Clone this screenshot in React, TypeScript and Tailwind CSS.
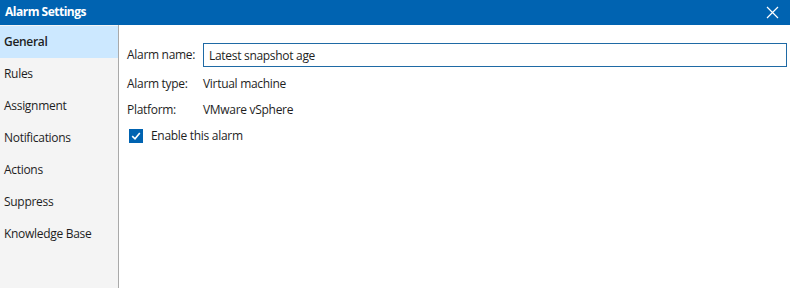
import { useState } from "react";

const NAV = [
  "General",
  "Rules",
  "Assignment",
  "Notifications",
  "Actions",
  "Suppress",
  "Knowledge Base",
];

export default function App() {
  const [active, setActive] = useState("General");
  const [name, setName] = useState("Latest snapshot age");
  const [enabled, setEnabled] = useState(true);

  return (
    <div className="flex h-[288px] w-[790px] flex-col overflow-hidden bg-white font-['Open_Sans',sans-serif] text-[12px] tracking-[-0.3px] text-[#1e1e1e]">
      <div className="flex h-[25px] shrink-0 items-center justify-between bg-[#0063b1] pb-[1px] pl-[5px] pr-[11px] text-white">
        <span className="text-[12px] font-bold tracking-[-0.5px]">Alarm Settings</span>
        <svg width="13" height="13" viewBox="0 0 13 13" aria-hidden>
          <path d="M1 1L12 12M12 1L1 12" stroke="white" strokeWidth="1.2" />
        </svg>
      </div>
      <div className="flex min-h-0 flex-1">
        <nav className="flex w-[119px] shrink-0 flex-col border-r border-[#a9a9a9] bg-[#f4f4f4] pt-[1px]">
          {NAV.map((item) => (
            <button
              key={item}
              type="button"
              onClick={() => setActive(item)}
              className={`flex h-[32px] items-center pl-[4px] text-left ${
                active === item ? "bg-[#cce8ff] pl-[3px] font-semibold" : ""
              }`}
            >
              {item}
            </button>
          ))}
        </nav>
        <div className="flex flex-1 flex-col pl-[8px] pr-[3px] pt-[18px]">
          <div className="flex items-center">
            <span className="w-[76px]">Alarm name:</span>
            <input
              value={name}
              onChange={(e) => setName(e.target.value)}
              className="h-[24px] flex-1 border border-[#1f6aa5] px-[5px] outline-none"
            />
          </div>
          <div className="mt-[5px] flex h-[24px] items-center">
            <span className="w-[76px]">Alarm type:</span>
            <span>Virtual machine</span>
          </div>
          <div className="mt-[2px] flex h-[24px] items-center">
            <span className="w-[76px]">Platform:</span>
            <span>VMware vSphere</span>
          </div>
          <label className="mt-[4px] flex h-[20px] cursor-pointer items-center pl-[2px]">
            <input
              type="checkbox"
              checked={enabled}
              onChange={(e) => setEnabled(e.target.checked)}
              className="sr-only"
            />
            <span className="flex h-[14px] w-[14px] items-center justify-center bg-[#0063b1]">
              {enabled ? (
                <svg width="10" height="10" viewBox="0 0 10 10" aria-hidden>
                  <path d="M1.2 5.2L4 7.8L8.8 2" fill="none" stroke="white" strokeWidth="1.6" />
                </svg>
              ) : null}
            </span>
            <span className="ml-[8px]">Enable this alarm</span>
          </label>
        </div>
      </div>
    </div>
  );
}
